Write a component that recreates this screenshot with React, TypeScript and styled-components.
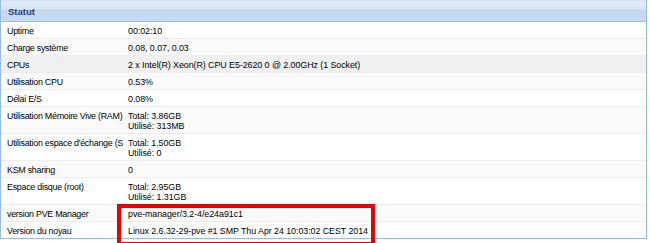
import React from 'react';
import styled, { createGlobalStyle } from 'styled-components';

const GlobalStyle = createGlobalStyle`
  html, body {
    margin: 0;
    padding: 0;
    background: #fff;
  }
  body {
    width: 650px;
    height: 243px;
    overflow: hidden;
    font-family: Tahoma, "Liberation Sans", Arial, sans-serif;
  }
`;

interface StatusRow {
  label: string;
  value: string[];
}

const rows: StatusRow[] = [
  { label: 'Uptime', value: ['00:02:10'] },
  { label: 'Charge système', value: ['0.08, 0.07, 0.03'] },
  { label: 'CPUs', value: ['2 x Intel(R) Xeon(R) CPU E5-2620 0 @ 2.00GHz (1 Socket)'] },
  { label: 'Utilisation CPU', value: ['0.53%'] },
  { label: 'Délai E/S', value: ['0.08%'] },
  { label: 'Utilisation Mémoire Vive (RAM)', value: ['Total: 3.86GB', 'Utilisé: 313MB'] },
  { label: "Utilisation espace d'échange (SWAP)", value: ['Total: 1.50GB', 'Utilisé: 0'] },
  { label: 'KSM sharing', value: ['0'] },
  { label: 'Espace disque (root)', value: ['Total: 2.95GB', 'Utilisé: 1.31GB'] },
  { label: 'version PVE Manager', value: ['pve-manager/3.2-4/e24a91c1'] },
  { label: 'Version du noyau', value: ['Linux 2.6.32-29-pve #1 SMP Thu Apr 24 10:03:02 CEST 2014'] },
];

const Page = styled.div`
  position: relative;
  width: 650px;
  height: 243px;
  overflow: hidden;
`;

const Panel = styled.div`
  width: 645px;
  border-left: 1px solid #99bbe8;
  border-right: 1px solid #99bbe8;
  border-bottom: 1px solid #99bbe8;
  background: #fff;
`;

const Header = styled.div`
  height: 21px;
  display: flex;
  align-items: flex-end;
  padding: 0 0 0 7px;
  border-bottom: 1px solid #99bbe8;
  background: linear-gradient(
    to bottom,
    #cddcf0 0px,
    #e0eaf7 1px,
    #d9e5f5 9px,
    #c4d7f0 10px,
    #c9daf1 21px
  );
`;

const Title = styled.span`
  font-size: 9.5px;
  font-weight: bold;
  color: #15428b;
  line-height: 10px;
  padding-bottom: 4px;
`;

const Grid = styled.div`
  display: flex;
  flex-direction: column;
`;

const Row = styled.div<{ $striped: boolean; $hover: boolean }>`
  display: grid;
  grid-template-columns: 122px 1fr;
  align-items: start;
  border-bottom: 1px solid #ededed;
  background: ${(p) => (p.$hover ? '#efefef' : p.$striped ? '#fafafa' : '#fff')};

  &:last-child {
    border-bottom: none;
  }
`;

const Cell = styled.div`
  font-size: 8.9px;
  line-height: 10px;
  letter-spacing: -0.26px;
  color: #000;
  padding: 4px 0 2px 6px;
  white-space: nowrap;
  overflow: hidden;
`;

const ValueCell = styled(Cell)`
  letter-spacing: -0.06px;
  padding: 4px 3px 2px 5px;
`;

const Line = styled.div`
  height: 10px;
`;

const Highlight = styled.div`
  position: absolute;
  left: 117px;
  top: 204px;
  width: 250px;
  height: 34px;
  border: 4px solid #e60000;
  pointer-events: none;
`;

const App: React.FC = () => {
  return (
    <Page>
      <GlobalStyle />
      <Panel>
        <Header>
          <Title>Statut</Title>
        </Header>
        <Grid>
          {rows.map((r, i) => (
            <Row key={r.label} $striped={i % 2 === 1} $hover={i === 2}>
              <Cell>{r.label}</Cell>
              <ValueCell>
                {r.value.map((v) => (
                  <Line key={v}>{v}</Line>
                ))}
              </ValueCell>
            </Row>
          ))}
        </Grid>
      </Panel>
      <Highlight />
    </Page>
  );
};

export default App;
